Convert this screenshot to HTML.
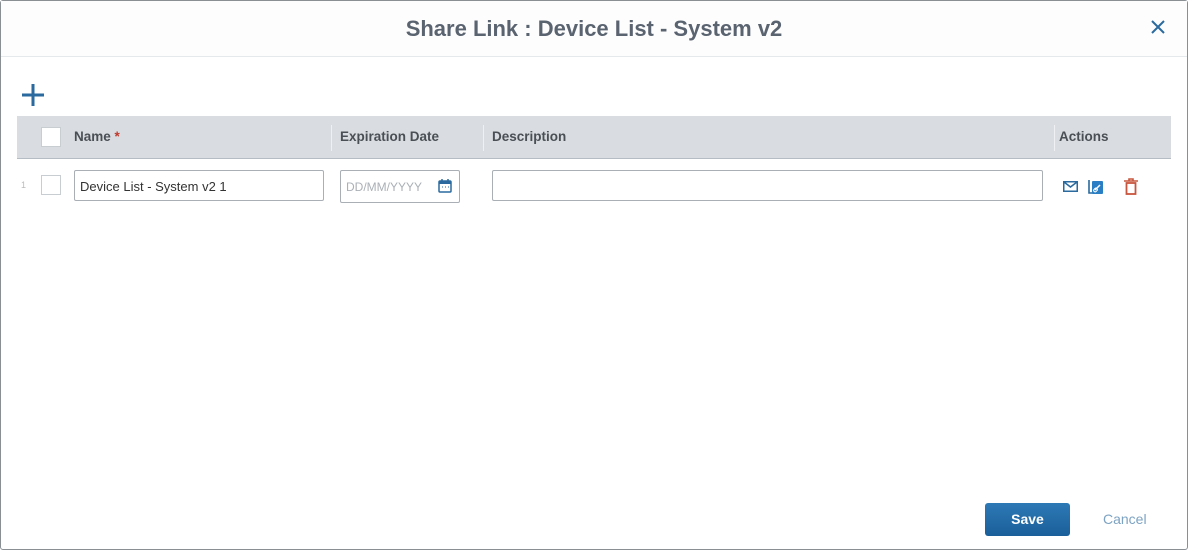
<!DOCTYPE html>
<html><head><meta charset="utf-8"><style>
*{box-sizing:border-box;margin:0;padding:0}
body{width:1188px;height:550px;background:#fff;font-family:"Liberation Sans",sans-serif;position:relative;overflow:hidden}
.frame{position:absolute;left:0;top:0;width:1188px;height:550px;border:1px solid #8a8f94;border-radius:3px}
.hdr{position:absolute;left:1px;top:1px;width:1186px;height:56px;border-bottom:1px solid #e6e9ec;background:#fdfdfd}
.title{position:absolute;left:0;width:1188px;top:16px;text-align:center;font-size:22px;font-weight:bold;color:#5a6370}
.close{position:absolute;left:1150px;top:19px}
.th{position:absolute;left:17px;top:116px;width:1154px;height:43px;background:#d9dde1;border-bottom:1px solid #b5bcc3}
.th span{position:absolute;top:13px;font-size:13.5px;font-weight:bold;color:#4a4f55}
.sep{position:absolute;top:9px;width:1px;height:26px;background:#eef0f2}
.cb{position:absolute;width:20px;height:20px;background:#fff;border:1px solid #c8cdd2}
.in{position:absolute;height:31px;border:1px solid #a9afb5;border-radius:2px;background:#fff;font-size:13px;color:#333;padding:8px 5px}
.btn{position:absolute;left:985px;top:503px;width:85px;height:33px;border-radius:3px;background:linear-gradient(#2d79b6,#1a5f9a);color:#fff;font-weight:bold;font-size:14px;text-align:center;line-height:33px}
.cancel{position:absolute;left:1103px;top:511px;font-size:14px;color:#7da3c3}
</style></head><body>
<div class="frame"></div>
<div class="hdr"></div>
<div class="title">Share Link : Device List - System v2</div>
<svg class="close" width="16" height="16" viewBox="0 0 16 16"><path d="M2 2L14 14M14 2L2 14" stroke="#2a6a9e" stroke-width="2"/></svg>
<svg style="position:absolute;left:21px;top:83px" width="24" height="24" viewBox="0 0 24 24"><path d="M12 1V23M1 12H23" stroke="#2a6a9e" stroke-width="3"/></svg>
<div class="th">
<div class="cb" style="left:24px;top:11px"></div>
<span style="left:57px">Name <b style="color:#c0392b">*</b></span>
<div class="sep" style="left:314px"></div>
<span style="left:323px">Expiration Date</span>
<div class="sep" style="left:466px"></div>
<span style="left:475px">Description</span>
<div class="sep" style="left:1037px"></div>
<span style="left:1042px">Actions</span>
</div>
<div style="position:absolute;left:21px;top:180px;font-size:9px;color:#bbb">1</div>
<div class="cb" style="left:41px;top:175px"></div>
<div class="in" style="left:74px;top:170px;width:250px">Device List - System v2 1</div>
<div class="in" style="left:340px;top:170px;width:120px;height:33px;color:#aab0b6;font-size:12px;padding-top:9px">DD/MM/YYYY</div>
<svg style="position:absolute;left:438px;top:179px" width="14" height="14" viewBox="0 0 14 14"><rect x="1" y="2" width="12" height="11" rx="1" fill="none" stroke="#2a6a9e" stroke-width="1.5"/><rect x="1" y="2" width="12" height="3" fill="#2a6a9e"/><path d="M4 0V3M10 0V3" stroke="#2a6a9e" stroke-width="1.5"/><path d="M4 8H5M7 8H8M10 8H11" stroke="#2a6a9e"/></svg>
<div class="in" style="left:492px;top:170px;width:551px"></div>
<svg style="position:absolute;left:1063px;top:181px" width="15" height="11" viewBox="0 0 15 11"><rect x="0.75" y="0.75" width="13.5" height="9.5" fill="none" stroke="#2a6a9e" stroke-width="1.5"/><path d="M1 1L7.5 6L14 1" fill="none" stroke="#2a6a9e" stroke-width="1.5"/></svg>
<svg style="position:absolute;left:1088px;top:178px" width="16" height="17" viewBox="0 0 16 17"><path d="M1 2V15H13" fill="none" stroke="#2a6a9e" stroke-width="1.6"/><rect x="4" y="3" width="11" height="13" rx="1" fill="#2a7fc4"/><path d="M7 12L12 7" stroke="#fff" stroke-width="1.5"/><rect x="6" y="10" width="3" height="4" rx="1.5" transform="rotate(45 7.5 12)" fill="none" stroke="#fff"/></svg>
<svg style="position:absolute;left:1124px;top:178px" width="14" height="17" viewBox="0 0 14 17"><path d="M0 3H14M5 3V1H9V3" stroke="#c8563e" stroke-width="1.6" fill="none"/><rect x="2.5" y="5" width="9" height="11" fill="none" stroke="#c8563e" stroke-width="1.8"/></svg>
<div class="btn">Save</div>
<div class="cancel">Cancel</div>
</body></html>
